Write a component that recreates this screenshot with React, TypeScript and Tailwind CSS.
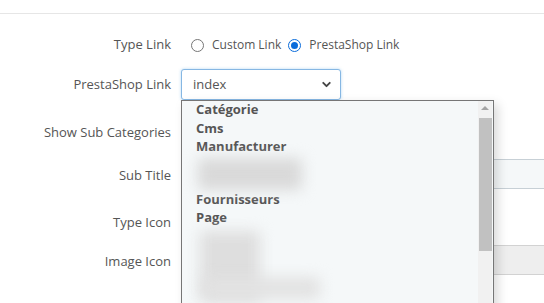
import { ChevronDown } from 'lucide-react'

function Label({ children, low }: { children: React.ReactNode; low?: boolean }) {
  return (
    <div className={`w-[181px] shrink-0 pr-[10px] text-right text-[13px] text-[#555] ${low ? 'pt-[4px]' : ''}`}>
      {children}
    </div>
  )
}

function Radio({ checked, label }: { checked?: boolean; label: string }) {
  return (
    <label className="flex items-center gap-[8px]">
      {checked ? (
        <span className="flex h-[13px] w-[13px] items-center justify-center rounded-full border-[1.5px] border-[#0a6cdb] bg-white">
          <span className="h-[7px] w-[7px] rounded-full bg-[#0a6cdb]" />
        </span>
      ) : (
        <span className="h-[13px] w-[13px] rounded-full border border-[#767676] bg-white" />
      )}
      <span className="text-[12px] text-[#555]">{label}</span>
    </label>
  )
}

function Dropdown() {
  return (
    <div className="absolute left-0 top-[31px] z-10 h-[240px] w-[313px] border border-b-0 border-[#767676] bg-[#f5f8f9] shadow-[4px_4px_10px_rgba(0,0,0,0.15)]">
      <div className="flex h-full">
        <ul className="-mt-[1px] flex-1 pl-[14px] text-[13px] font-bold leading-[18.5px] text-[#555]">
          <li>Catégorie</li>
          <li>Cms</li>
          <li>Manufacturer</li>
          <li className="relative h-[34px]">
            <div className="absolute left-[2px] top-[2px] h-[32px] w-[104px] rounded bg-[#d9d9d9] blur-[7px]" />
          </li>
          <li>Fournisseurs</li>
          <li>Page</li>
          <li className="relative h-[80px]">
            <div className="absolute left-[4px] top-[4px] h-[70px] w-[60px] rounded bg-[#dedede] blur-[7px]" />
            <div className="absolute left-[6px] top-[50px] h-[22px] w-[118px] rounded bg-[#e2e2e2] blur-[7px]" />
          </li>
        </ul>
        <div className="mr-[1px] flex w-[14px] flex-col items-center bg-[#f1f1f1]">
          <div className="mt-[5px] h-0 w-0 border-x-[4px] border-b-[4px] border-x-transparent border-b-[#a3a3a3]" />
          <div className="mt-[8px] h-[133px] w-[13px] bg-[#c1c1c1]" />
        </div>
      </div>
    </div>
  )
}

export default function App() {
  return (
    <div className="h-[303px] w-[544px] overflow-hidden bg-white font-['Open_Sans',sans-serif]">
      <div className="h-[14px] border-b border-[#e6e6e6]" />
      <div className="mt-[16px] flex h-[30px] items-center">
        <Label>Type Link</Label>
        <div className="flex items-center gap-[7px] pl-[10px]">
          <Radio label="Custom Link" />
          <Radio checked label="PrestaShop Link" />
        </div>
      </div>
      <div className="mt-[9px] flex h-[31px] items-center">
        <Label>PrestaShop Link</Label>
        <div className="relative">
          <div className="flex h-[31px] w-[160px] items-center justify-between rounded-[3px] border border-[#86b7e3] bg-white pl-[11px] pr-[7px] shadow-[0_0_3px_rgba(102,175,233,0.5)]">
            <span className="text-[13px] text-[#555]">index</span>
            <ChevronDown size={13} strokeWidth={3.5} className="text-[#444]" />
          </div>
          <Dropdown />
        </div>
      </div>
      <div className="mt-[16px] flex h-[30px] items-center">
        <Label low>Show Sub Categories</Label>
      </div>
      <div className="mt-[13px] flex h-[30px] items-center">
        <Label low>Sub Title</Label>
        <div className="h-[30px] flex-1 border border-r-0 border-[#c7d0d6] bg-[#f5f8f9]" />
      </div>
      <div className="mt-[17px] flex h-[30px] items-center">
        <Label low>Type Icon</Label>
      </div>
      <div className="mt-[9px] flex h-[30px] items-center">
        <Label low>Image Icon</Label>
        <div className="h-[30px] flex-1 border border-r-0 border-[#d2d2d2] bg-[#eeeeee]" />
      </div>
      <div className="mt-[18px] flex h-[30px] items-center">
        <Label low>Icon of Link</Label>
      </div>
    </div>
  )
}
